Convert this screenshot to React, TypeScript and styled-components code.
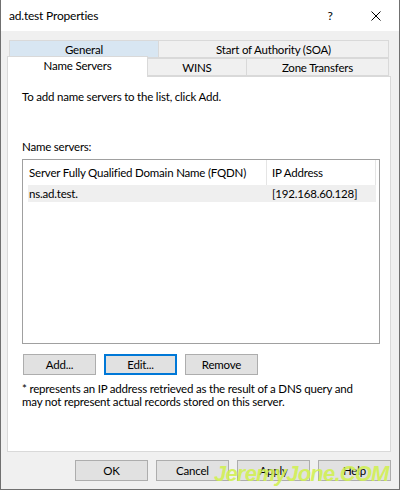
import React from 'react';
import styled, { createGlobalStyle } from 'styled-components';

const GlobalStyle = createGlobalStyle`
  html, body {
    margin: 0;
    padding: 0;
    background: #ffffff;
  }
  * {
    box-sizing: border-box;
  }
`;

const uiFont = `Lato, "Liberation Sans", sans-serif`;

const Window = styled.div`
  position: relative;
  width: 400px;
  height: 490px;
  display: flex;
  flex-direction: column;
  border-left: 1px solid #707070;
  border-right: 1px solid #707070;
  border-bottom: 1px solid #707070;
  font-family: ${uiFont};
  font-size: 11.5px;
  letter-spacing: -0.2px;
  color: #000;
  background: #f0f0f0;
  white-space: nowrap;
`;

const TitleBar = styled.div`
  height: 31px;
  display: flex;
  align-items: center;
  background: #ffffff;
  padding-left: 8px;
`;

const Title = styled.div`
  flex: 1;
  font-size: 12px;
`;

const CaptionButton = styled.div`
  width: 46px;
  height: 31px;
  display: flex;
  align-items: center;
  justify-content: center;
  font-size: 12px;
`;

const Body = styled.div`
  flex: 1;
  display: flex;
  flex-direction: column;
  padding: 9px 8px 8px 6px;
`;

const TabRow = styled.div<{ $back?: boolean }>`
  display: flex;
  align-items: flex-end;
  height: ${(p) => (p.$back ? '18px' : '20px')};
  margin: ${(p) => (p.$back ? '0 2px' : '-2px 0 0 0')};
`;

const Tab = styled.div<{ $width?: number; $hover?: boolean; $active?: boolean; $last?: boolean }>`
  flex: ${(p) => (p.$width ? `0 0 ${p.$width}px` : '1')};
  height: ${(p) => (p.$active ? '21px' : '18px')};
  margin-bottom: ${(p) => (p.$active ? '-1px' : '0')};
  margin-right: ${(p) => (p.$last ? '2px' : '0')};
  margin-left: -1px;
  &:first-child {
    margin-left: 0;
  }
  position: relative;
  z-index: ${(p) => (p.$active ? 2 : 1)};
  display: flex;
  align-items: center;
  justify-content: center;
  padding-bottom: ${(p) => (p.$active ? '3px' : '0')};
  background: ${(p) => (p.$active ? '#ffffff' : p.$hover ? '#d8e6f2' : '#f0f0f0')};
  border: 1px solid #d9d9d9;
  border-bottom: ${(p) => (p.$active ? 'none' : '1px solid #d9d9d9')};
`;

const Panel = styled.div`
  height: 376px;
  background: #ffffff;
  border: 1px solid #d9d9d9;
  padding: 12px 10px 0 14px;
  display: flex;
  flex-direction: column;
`;

const Label = styled.div<{ $gap?: number }>`
  line-height: 16px;
  margin-top: ${(p) => p.$gap ?? 0}px;
`;

const ListBox = styled.div`
  width: 358px;
  height: 185px;
  margin-top: 4px;
  border: 1px solid #a0a0a0;
  background: #ffffff;
  padding-left: 5px;
`;

const HeaderRow = styled.div`
  display: flex;
  height: 25px;
`;

const HeaderCell = styled.div<{ $width: number }>`
  flex: 0 0 ${(p) => p.$width}px;
  display: flex;
  align-items: center;
  padding-left: ${(p) => (p.$width > 150 ? 1 : 5)}px;
  border-right: 1px solid #e5e5e5;
`;

const DataRow = styled.div`
  display: flex;
  height: 17px;
  width: 348px;
  background: #efefef;
`;

const DataCell = styled.div<{ $width: number }>`
  flex: 0 0 ${(p) => p.$width}px;
  display: flex;
  align-items: center;
  padding-left: ${(p) => (p.$width > 150 ? 1 : 5)}px;
`;

const ButtonRow = styled.div<{ $end?: boolean }>`
  display: flex;
  gap: 8px;
  justify-content: ${(p) => (p.$end ? 'flex-end' : 'flex-start')};
  margin: ${(p) => (p.$end ? '8px 0 0 0' : '10px 0 0 1px')};
`;

const Button = styled.div<{ $default?: boolean }>`
  width: 73px;
  height: 21px;
  display: flex;
  align-items: center;
  justify-content: center;
  background: #e1e1e1;
  border: ${(p) => (p.$default ? '2px solid #0078d7' : '1px solid #adadad')};
`;

const Note = styled.div`
  margin-top: 7px;
  line-height: 13px;
`;

const Watermark = styled.div`
  position: absolute;
  left: 213px;
  top: 461px;
  font-family: "Liberation Sans", sans-serif;
  font-style: italic;
  font-weight: bold;
  font-size: 22px;
  line-height: 25px;
  letter-spacing: -0.8px;
  color: rgba(208, 240, 80, 0.88);
  pointer-events: none;
`;

const CloseIcon = () => (
  <svg width="10" height="10" viewBox="0 0 10 10">
    <path d="M0.5 0.5 L9.5 9.5 M9.5 0.5 L0.5 9.5" stroke="#000" strokeWidth="1" fill="none" />
  </svg>
);

export default function App() {
  return (
    <>
      <GlobalStyle />
      <Window>
        <TitleBar>
          <Title>ad.test Properties</Title>
          <CaptionButton>?</CaptionButton>
          <CaptionButton>
            <CloseIcon />
          </CaptionButton>
        </TitleBar>
        <Body>
          <TabRow $back>
            <Tab $width={150} $hover>General</Tab>
            <Tab>Start of Authority (SOA)</Tab>
          </TabRow>
          <TabRow>
            <Tab $width={141} $active>Name Servers</Tab>
            <Tab $width={100}>WINS</Tab>
            <Tab $last>Zone Transfers</Tab>
          </TabRow>
          <Panel>
            <Label>To add name servers to the list, click Add.</Label>
            <Label $gap={34}>Name servers:</Label>
            <ListBox>
              <HeaderRow>
                <HeaderCell $width={239}>Server Fully Qualified Domain Name (FQDN)</HeaderCell>
                <HeaderCell $width={109}>IP Address</HeaderCell>
              </HeaderRow>
              <DataRow>
                <DataCell $width={239}>ns.ad.test.</DataCell>
                <DataCell $width={109}>[192.168.60.128]</DataCell>
              </DataRow>
            </ListBox>
            <ButtonRow>
              <Button>Add...</Button>
              <Button $default>Edit...</Button>
              <Button>Remove</Button>
            </ButtonRow>
            <Note>
              * represents an IP address retrieved as the result of a DNS query and
              <br />
              may not represent actual records stored on this server.
            </Note>
          </Panel>
          <ButtonRow $end>
            <Button>OK</Button>
            <Button>Cancel</Button>
            <Button>Apply</Button>
            <Button>Help</Button>
          </ButtonRow>
        </Body>
        <Watermark>JeremyJone.COM</Watermark>
      </Window>
    </>
  );
}
